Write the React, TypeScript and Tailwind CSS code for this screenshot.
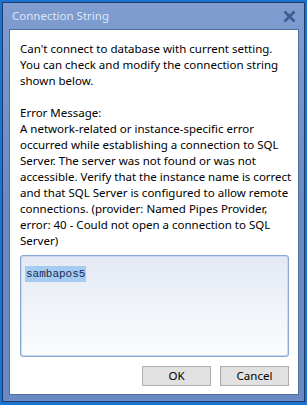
export default function App() {
  const lines = [
    "Can't connect to database with current setting.",
    "You can check and modify the connection string",
    "shown below.",
    "",
    "Error Message:",
    "A network-related or instance-specific error",
    "occurred while establishing a connection to SQL",
    "Server. The server was not found or was not",
    "accessible. Verify that the instance name is correct",
    "and that SQL Server is configured to allow remote",
    "connections. (provider: Named Pipes Provider,",
    "error: 40 - Could not open a connection to SQL",
    "Server)",
  ];

  return (
    <div className="w-[307px] h-[405px] bg-[#1d74cf] pt-[2px] pl-[2px] font-['Noto_Sans',sans-serif]">
      {/* Window frame */}
      <div className="w-[303px] h-[400px] border border-[#1b3a6e] bg-gradient-to-b from-[#809dd0] via-[#6a8ac2] to-[#6a8ac2] flex flex-col">
        {/* Title bar */}
        <div className="h-[26px] flex items-center justify-between pl-[9px] pr-[7px]">
          <span className="text-[11.5px] text-[#dce7f6] leading-none">Connection String</span>
          <svg width="13" height="13" viewBox="0 0 13 13" className="mr-[1px]">
            <path d="M2.5 2.5 L10.5 10.5 M10.5 2.5 L2.5 10.5" stroke="#3f5f94" strokeWidth="2.8" strokeLinecap="square" />
          </svg>
        </div>

        {/* Client area */}
        <div className="ml-[6px] mr-[5px] mb-[6px] flex-1 border border-[#4f6fa3] bg-white flex flex-col pl-[10px] pr-[9px] pt-[11px] pb-[6px]">
          <div className="text-[11.5px] leading-[16px] text-black whitespace-nowrap">
            {lines.map((l, i) => (
              <div key={i} className="h-[16px]">{l}</div>
            ))}
          </div>

          {/* Connection string box */}
          <div className="mt-[6px] h-[102px] rounded-[3px] border border-[#8aa7d4] p-[1px] bg-[#c9daf2]">
            <div className="h-full rounded-[2px] bg-gradient-to-b from-[#e4e9f3] to-[#fbfcfe] pl-[3px] pt-[2px]">
              <span className="inline-block bg-[#a4ccf2] text-[#1b2a55] font-['Liberation_Mono',monospace] text-[11px] leading-[16px] px-[1px]">
                sambapos5
              </span>
            </div>
          </div>

          {/* Buttons */}
          <div className="mt-[9px] flex justify-end gap-[9px]">
            <button className="w-[69px] h-[20px] bg-[#e1e1e1] border border-[#adadad] text-[11.5px] text-black leading-none">
              OK
            </button>
            <button className="w-[69px] h-[20px] bg-[#e1e1e1] border border-[#adadad] text-[11.5px] text-black leading-none">
              Cancel
            </button>
          </div>
        </div>
      </div>
    </div>
  );
}
